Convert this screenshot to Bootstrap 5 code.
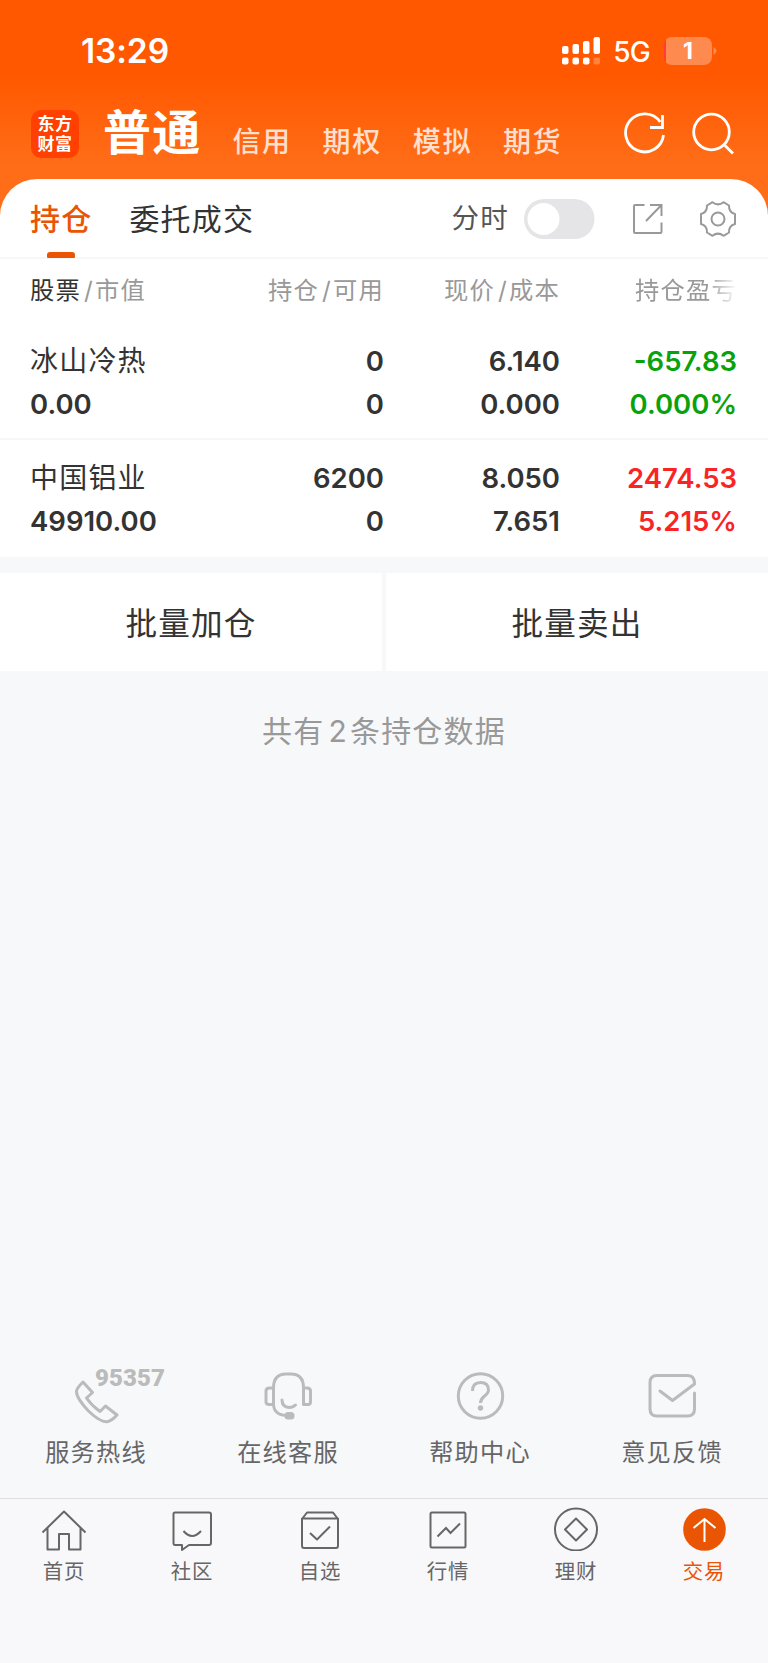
<!DOCTYPE html>
<html lang="zh-CN">
<head>
<meta charset="utf-8">
<meta name="viewport" content="width=device-width, initial-scale=1">
<title>持仓</title>
<link href="https://cdn.jsdelivr.net/npm/bootstrap@5.3.0/dist/css/bootstrap.min.css" rel="stylesheet">
<style>
body{font-family:Inter,"Noto Sans CJK SC",sans-serif;background:#f7f8fa;color:#333;letter-spacing:1.2px;overflow-x:hidden}
svg{display:block;flex:none;fill:none}
.app{height:1663px}
.top{height:215px;background:linear-gradient(#ff5800 0,#ff5800 75px,#ff6d18 165px,#ff6d18);padding:0 32px 0 31px}
.status{height:102px;padding:0 19px 0 50px}
.clock{font-size:33.5px;font-weight:600;line-height:40px;letter-spacing:-.1px}
.net{font-size:28px;font-weight:500;line-height:34px;letter-spacing:-.8px;padding-top:2px}
.power{width:48px;height:28px;border-radius:8px;background:linear-gradient(90deg,#ff3b3b 2px,#ff8a50 2px);font-size:23px;font-weight:700;line-height:28px;letter-spacing:0;margin-left:14px}
.titles{height:77px}
.brand{width:48px;height:48px;border-radius:10px;background:#ff4000;font-size:17px;font-weight:700;line-height:20px;letter-spacing:.4px;margin-top:8px}
.main-title{font-size:48px;font-weight:700;line-height:62px;letter-spacing:1.2px;margin-left:24px}
.sub{font-size:28px;font-weight:500;line-height:40px;color:#ffe0cf;letter-spacing:1.6px;margin:20px 0 0 31px;gap:31px}
.sheet{margin-top:-36px;border-radius:37px 37px 0 0;background:#fff;position:relative}
.tabs{height:80px;border-bottom:2px solid #f7f7f8;padding:0 31px 0 30px}
.tab{font-size:30px;line-height:80px;position:relative}
.tab.on{color:#ea5504;font-weight:500}
.tab.on::after{content:"";position:absolute;left:17px;top:73px;width:28px;height:6px;border-radius:3px 3px 1px 1px;background:#ea5504}
.cols{display:grid;grid-template-columns:200px 1fr 176px 176px;padding:0 31px 0 30px}
.cols>div:not(:first-child){text-align:right}
.heads{height:62px;line-height:62px;font-size:24.3px;color:#999}
.heads>div{white-space:nowrap}
.heads>div:nth-child(2),.heads>div:nth-child(3){padding-right:1px}
.heads i{font-style:normal;margin:0 1px 0 3px}
.heads .last{overflow:hidden;margin-left:74px;text-align:left!important;-webkit-mask:linear-gradient(90deg,#000 72px,transparent 103px)}
.stock{height:117px;padding-top:19px}
.stock+.stock{height:119px;padding-top:17px;border-top:2px solid #f7f7f8}
.stock .cell>div{line-height:42.6px;height:42.6px;font-size:27.5px;font-weight:600;letter-spacing:0;padding-right:1px}
.stock .cell:last-child>div{padding-right:0}
.stock .cell>.nm{font-size:28px;font-weight:400;letter-spacing:1.2px}
.green{color:#0aa20a}.red{color:#f92525}
.batch{margin-top:16px;height:98px;gap:4px}
.batch>a{flex:1;background:#fff;font-size:31.6px;line-height:102px;text-align:center;color:#333;text-decoration:none}
.total{font-size:30px;line-height:40px;margin-top:40px;color:#999;text-align:center}
.total>span{margin:0 2px 0 4px}
.service{height:136px;font-size:24.2px;color:#666}
.service .lbl{line-height:32px;margin-top:13px}
.hot{position:absolute;left:95px;top:2px;font-family:Roboto,sans-serif;font-size:24px;line-height:28px;font-weight:900;color:#bbb;letter-spacing:.1px}
.bar{height:165px;border-top:1px solid #dddde0;background:#f8f8fb;color:#666;font-size:20.4px;letter-spacing:.9px}
.bar svg{margin-top:4px}
.bar .lbl{line-height:28px;margin-top:7px}
</style>
</head>
<body>
<div class="app d-flex flex-column">
<header class="top">
  <div class="status d-flex align-items-center text-white">
    <span class="clock">13:29</span>
    <svg class="ms-auto" width="40" height="28" viewBox="0 0 40 28"><g fill="#fff"><rect x="1" y="9" width="6.500" height="8" rx="2"/><rect x="11.500" y="7" width="6.500" height="10" rx="2"/><rect x="22" y="4" width="6.500" height="13" rx="2"/><rect x="32.500" y="0" width="6.500" height="17" rx="2"/><rect x="1" y="20.500" width="6.500" height="7" rx="2"/><rect x="11.500" y="20.500" width="6.500" height="7" rx="2"/><rect x="22" y="20.500" width="6.500" height="7" rx="2"/><rect x="32.500" y="20.500" width="6.500" height="7" rx="2" opacity=".25"/></g></svg>
    <span class="net ms-2 ps-1">5G</span>
    <span class="power text-center">1</span>
    <svg width="5" height="10" viewBox="0 0 5 10"><path d="M1.500 1q6 4 0 8z" fill="#ff8a50"/></svg>
  </div>
  <div class="titles d-flex text-white">
    <div class="brand text-center pt-1">东方<br>财富</div>
    <div class="main-title">普通</div>
    <div class="sub d-flex"><span>信用</span><span>期权</span><span>模拟</span><span>期货</span></div>
    <svg class="ms-auto" style="margin-top:9px" width="112" height="48" viewBox="0 0 112 48" stroke="#fff" stroke-width="2.800"><path d="M36.200 11A19 19 0 1 0 39.500 24M38.500 4V16.500H26"/><circle cx="87.500" cy="21" r="17.800"/><path d="M100 33.500l9 9"/></svg>
  </div>
</header>
<main class="flex-grow-1 d-flex flex-column">
  <section class="sheet">
    <div class="tabs d-flex">
      <div class="tab on">持仓</div>
      <div class="tab" style="margin-left:37px">委托成交</div>
      <div class="ms-auto d-flex align-items-center" style="height:80px">
        <span style="font-size:27.5px;color:#555">分时</span>
        <svg style="margin-left:14px" width="72" height="40"><rect x="1" width="70.500" height="40" rx="20" fill="#e5e5e7"/><circle cx="20.500" cy="20" r="16" fill="#fff"/></svg>
        <svg style="margin-left:37px" width="32" height="32" viewBox="0 0 32 32" stroke="#999" stroke-width="2"><path d="M12.500 2H3q-1 0-1 1V29q0 1 1 1H28.500q1 0 1-1V19.500M18 2H29.500V13M29 2.500L14 18"/></svg>
        <svg style="margin-left:35px" width="38" height="38" viewBox="0 0 38 38" stroke="#999" stroke-width="2" stroke-linejoin="round"><circle cx="19" cy="19" r="6.500"/><path d="M13.500 2.200Q19 6.500 24.500 2.200L30 5.500Q29.800 12.500 36 14V24Q29.800 25.500 30 32.500L24.500 35.800Q19 31.500 13.500 35.800L8 32.500Q8.200 25.500 2 24V14Q8.200 12.500 8 5.500Z"/></svg>
      </div>
    </div>
    <div class="cols heads">
      <div><span style="color:#333">股票</span><i>/</i>市值</div><div>持仓<i>/</i>可用</div><div>现价<i>/</i>成本</div><div class="last">持仓盈亏</div>
    </div>
    <div class="cols stock">
      <div class="cell"><div class="nm">冰山冷热</div><div>0.00</div></div>
      <div class="cell"><div>0</div><div>0</div></div>
      <div class="cell"><div>6.140</div><div>0.000</div></div>
      <div class="cell green"><div>-657.83</div><div>0.000%</div></div>
    </div>
    <div class="cols stock">
      <div class="cell"><div class="nm">中国铝业</div><div>49910.00</div></div>
      <div class="cell"><div>6200</div><div>0</div></div>
      <div class="cell"><div>8.050</div><div>7.651</div></div>
      <div class="cell red"><div>2474.53</div><div>5.215%</div></div>
    </div>
  </section>
  <div class="batch d-flex"><a href="#">批量加仓</a><a href="#">批量卖出</a></div>
  <div class="total">共有<span>2</span>条持仓数据</div>
  <div class="service row g-0 text-center mt-auto">
    <div class="col position-relative"><span class="hot">95357</span>
      <svg class="mx-auto" width="56" height="62" viewBox="0 0 56 62" stroke="#bbb" stroke-width="3" stroke-linejoin="round"><path d="M15 20L24.500 30.500L18.500 36Q24 44 32 49.500L37.500 44L49 53Q44 58.500 40 59.500Q33 61 21 49.500Q8 36 8.500 29Q9 26 15 20Z"/></svg>
      <div class="lbl">服务热线</div></div>
    <div class="col"><svg class="mx-auto" width="56" height="62" viewBox="0 0 56 62" stroke="#bbb" stroke-width="3" stroke-linecap="round" stroke-linejoin="round"><path d="M13.500 43V26Q13.500 12 26 12H31Q43.500 12 43.500 26V42.500H48Q50.500 42.500 50.500 40V29Q50.500 26 47 26H43.500M13.500 26H9.500Q6 26 6 29V40Q6 42.500 9.500 42.500H13.500Q14 53.500 28 53.500M22 38Q22 45 29 45.500Q33 45.500 35.500 43"/><rect x="26" y="51.500" width="7" height="4.500" rx="2" fill="#bbb"/></svg>
      <div class="lbl">在线客服</div></div>
    <div class="col"><svg class="mx-auto" width="56" height="62" viewBox="0 0 56 62" stroke="#bbb" stroke-width="3"><circle cx="28.500" cy="34" r="22.200"/><path d="M20.500 29Q20.500 20.500 28.500 20.500T36.500 28Q36.500 31 32 34.500Q28.500 37.500 28.500 41"/><circle cx="28.500" cy="46" r="1.200" fill="#bbb"/></svg>
      <div class="lbl">帮助中心</div></div>
    <div class="col"><svg class="mx-auto" width="56" height="62" viewBox="0 0 56 62" stroke="#bbb" stroke-width="3" stroke-linecap="round" stroke-linejoin="round"><path d="M50.500 31V47Q50.500 54 43.500 54H13Q6 54 6 47V20.500Q6 13.500 13 13.500H44Q50.500 13.500 50.500 22L28.500 38.500L16 29"/></svg>
      <div class="lbl">意见反馈</div></div>
  </div>
</main>
<nav class="bar row g-0 text-center" style="flex:none">
  <div class="col"><svg class="mx-auto" width="46" height="48" viewBox="0 0 46 48" stroke="#666" stroke-width="2"><path d="M1.500 29.500L23 8.500L44.500 29.500M6.500 25V46.500H18V31H28V46.500H39.500V25" stroke-linejoin="round"/></svg><div class="lbl">首页</div></div>
  <div class="col"><svg class="mx-auto" width="46" height="48" viewBox="0 0 46 48" stroke="#666" stroke-width="2"><path d="M6 9.500H40Q42 9.500 42 11.500V40Q42 42 40 42H20L13 47V42H6Q4.500 42 4.500 40V11Q4.500 9.500 6 9.500ZM14.500 28Q23 38 32 28" stroke-linejoin="round"/></svg><div class="lbl">社区</div></div>
  <div class="col"><svg class="mx-auto" width="46" height="48" viewBox="0 0 46 48" stroke="#666" stroke-width="2" stroke-linejoin="round"><path d="M5 16L10 9.500H36L41 16M5 15.500H41V42.500Q41 45 39 45H7Q5 45 5 42.500ZM13 30L20 36.500L33 23.500"/></svg><div class="lbl">自选</div></div>
  <div class="col"><svg class="mx-auto" width="46" height="48" viewBox="0 0 46 48" stroke="#666" stroke-width="2"><rect x="5.500" y="9.500" width="35" height="35" rx="1.500"/><path d="M12.500 33.500L21 25L25.500 30L35 20.500"/></svg><div class="lbl">行情</div></div>
  <div class="col"><svg class="mx-auto" width="46" height="48" viewBox="0 0 46 48" stroke="#666" stroke-width="2"><circle cx="23" cy="26.500" r="21"/><path d="M23 15.500L34 26.500L23 37.500L12 26.500Z" stroke-linejoin="round"/></svg><div class="lbl">理财</div></div>
  <div class="col" style="color:#ea5504"><svg class="mx-auto" width="46" height="48" viewBox="0 0 46 48" stroke="#fff" stroke-width="2"><circle cx="23.500" cy="26.500" r="21.300" fill="#ea5504" stroke="none"/><path d="M23.500 39V16M12.500 25L23.500 16L34.500 25"/></svg><div class="lbl">交易</div></div>
</nav>
</div>
<script src="https://cdn.jsdelivr.net/npm/bootstrap@5.3.0/dist/js/bootstrap.bundle.min.js"></script>
</body>
</html>
